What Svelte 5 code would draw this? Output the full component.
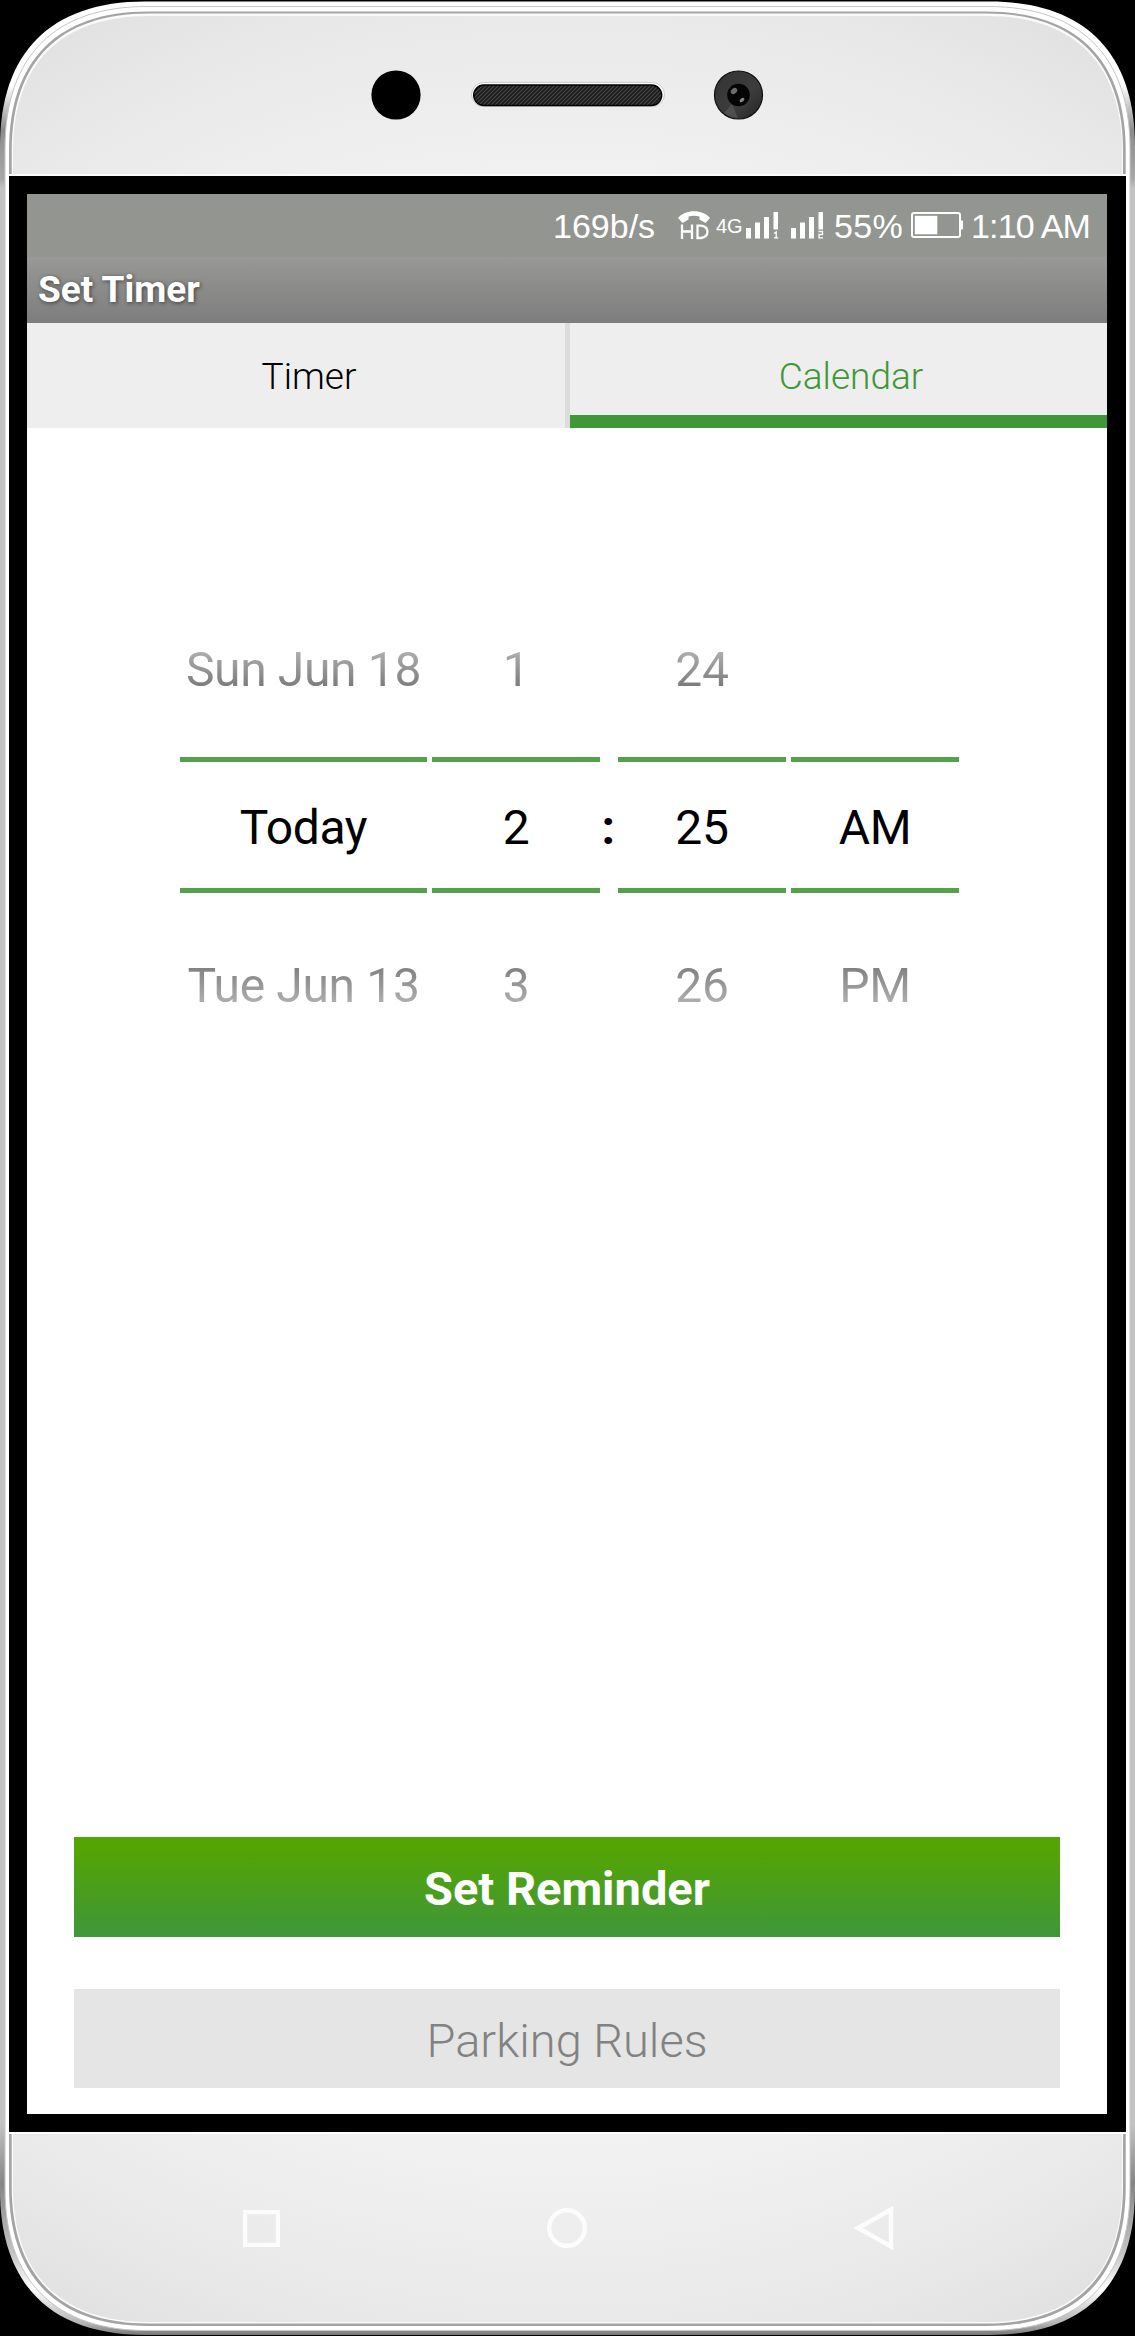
<script>
  // Outline with soft corners, given its four edges and the corner extent.
  function shell(l, t, r, b, c) {
    const k = c * 0.35;
    return `M${l} ${t + c}C${l} ${t + k} ${l + k} ${t} ${l + c} ${t}H${r - c}C${r - k} ${t} ${r} ${t + k} ${r} ${t + c}V${b - c}C${r} ${b - k} ${r - k} ${b} ${r - c} ${b}H${l + c}C${l + k} ${b} ${l} ${b - k} ${l} ${b - c}Z`;
  }

  const tabs = [
    { label: 'Timer', active: false },
    { label: 'Calendar', active: true }
  ];

  const wheels = [
    { kind: 'day', values: ['Sun Jun 18', 'Today', 'Tue Jun 13'] },
    { kind: 'hour', values: ['1', '2', '3'] },
    { kind: 'minute', values: ['24', '25', '26'] },
    { kind: 'half', values: ['', 'AM', 'PM'] }
  ];
</script>

<div class="phone">
  <svg class="body" viewBox="0 0 1135 2336" width="1135" height="2336" aria-hidden="true">
    <defs>
      <linearGradient id="rim" x1="0" y1="0" x2="0" y2="1">
        <stop offset="0" stop-color="#fff" />
        <stop offset="0.036" stop-color="#fff" />
        <stop offset="0.055" stop-color="#8c8c8c" />
        <stop offset="0.076" stop-color="#a8a8a8" />
        <stop offset="0.08" stop-color="#c2c2c2" />
        <stop offset="0.91" stop-color="#c2c2c2" />
        <stop offset="0.935" stop-color="#858585" />
        <stop offset="0.965" stop-color="#c4c4c4" />
        <stop offset="0.98" stop-color="#fff" />
        <stop offset="0.995" stop-color="#b4b4b4" />
        <stop offset="1" stop-color="#777" />
      </linearGradient>
      <radialGradient id="face" gradientUnits="userSpaceOnUse" cx="567" cy="1168" r="1290" gradientTransform="translate(567 0) scale(0.9 1) translate(-567 0)">
        <stop offset="0" stop-color="#f4f4f4" />
        <stop offset="0.75" stop-color="#f2f2f2" />
        <stop offset="0.9" stop-color="#e9e9e9" />
        <stop offset="1" stop-color="#e0e0e0" />
      </radialGradient>
    </defs>
    <path d={shell(0, 1.5, 1135, 2335, 145)} fill="url(#rim)" />
    <path d={shell(5, 6.5, 1130, 2330.5, 142)} fill="#fff" stroke="#c6c6c6" stroke-width="1" />
    <path d={shell(9, 11.5, 1125.7, 2326, 139)} fill="#a4a4a4" />
    <path d={shell(11.7, 13.5, 1123, 2323.5, 137)} fill="#fbfbfb" />
    <path d={shell(13, 16, 1122, 2322, 136)} fill="url(#face)" />
  </svg>

  <header class="forehead">
    <svg width="394" height="52" viewBox="0 0 394 52" aria-hidden="true">
      <defs>
        <pattern id="mesh" width="4" height="4" patternUnits="userSpaceOnUse">
          <rect width="4" height="4" fill="#1b1b1b" />
          <path d="M0 4L4 0M-1 1L1 -1M3 5L5 3" stroke="#484848" stroke-width="1.1" />
        </pattern>
        <linearGradient id="lens" x1="0" y1="0" x2="1" y2="1">
          <stop offset="0" stop-color="#333" />
          <stop offset="0.6" stop-color="#3d3d3d" />
          <stop offset="1" stop-color="#242424" />
        </linearGradient>
      </defs>
      <circle cx="25" cy="26" r="24.6" fill="#000" />
      <rect x="100.500" y="13.500" width="193" height="24" rx="12" fill="#fafafa" stroke="#ccc" />
      <rect x="102.700" y="16" width="188" height="20.500" rx="10.200" fill="url(#mesh)" stroke="#000" stroke-width="1.400" />
      <circle cx="367.500" cy="26" r="24" fill="url(#lens)" stroke="#111" stroke-width="1.200" />
      <path d="M361 35L353 44A24 24 0 0 0 367 49Z" fill="#656565" opacity="0.450" />
      <circle cx="367.500" cy="26" r="11.300" fill="#050505" />
      <ellipse cx="363" cy="22" rx="3.600" ry="2.600" transform="rotate(-40 363 22)" fill="#6a6a6a" />
      <ellipse cx="371" cy="31" rx="2.800" ry="1.700" transform="rotate(-40 371 31)" fill="#888" />
    </svg>
  </header>

  <main class="bezel">
    <div class="screen">
      <div class="status">
        <span class="rate">169b/s</span>
        <svg class="hd" width="32" height="29" viewBox="0 0 32 29">
          <path d="M0 7C7 -2 25 -2 32 7L27.500 12L21.500 8.500V5.500Q16 4 10.500 5.500V8.500L4.500 12Z" fill="#fff" />
          <path d="M4 13.500V28M14 13.500V28M4 20.500H14M19.500 14.600V27H23Q29.500 26 29.500 20.800Q29.500 15.500 23 14.600Z" fill="none" stroke="#fff" stroke-width="2.300" />
        </svg>
        <span class="net">4G</span>
        <svg class="signal" width="78" height="27" viewBox="0 0 78 27">
          <g fill="#fff">
            <path d="M0 16H5V26.500H0ZM9 10.500H14V26.500H9ZM18 5H23V26.500H18ZM27.500 0H32V17.500H27.500Z" />
            <path d="M45 16H50V26.500H45ZM54 10.500H59V26.500H54ZM63 5H68V26.500H63ZM72.500 0H77V17.500H72.500Z" />
          </g>
          <path d="M28 21.500L30.200 20V25.500M28 25.800H32.200M72.500 19.500H76.500V22.500H73V25.800H77" fill="none" stroke="#fff" stroke-width="1.300" />
        </svg>
        <span class="charge">55%</span>
        <svg class="battery" width="52" height="26" viewBox="0 0 52 26">
          <rect x="1" y="1" width="48" height="24" rx="2" fill="none" stroke="#fff" stroke-width="2" />
          <rect x="3.800" y="3.800" width="22.500" height="18.500" fill="#fff" />
          <path d="M49 8.500H52V17.500H49Z" fill="#fff" />
        </svg>
        <span class="clock">1:10 AM</span>
      </div>

      <h1 class="title">Set Timer</h1>

      <nav class="tabs">
        {#each tabs as tab}
          <button class="tab" class:active={tab.active}>{tab.label}</button>
        {/each}
      </nav>

      <section class="picker">
        {#each wheels as wheel}
          {#if wheel.kind === 'minute'}<span class="colon">:</span>{/if}
          <div class="wheel {wheel.kind}">
            <span class="value before">{wheel.values[0]}</span>
            <span class="value chosen">{wheel.values[1]}</span>
            <span class="value after">{wheel.values[2]}</span>
          </div>
        {/each}
      </section>

      <footer class="actions">
        <button class="remind">Set Reminder</button>
        <button class="rules">Parking Rules</button>
      </footer>
    </div>
  </main>

  <div class="chin">
    <svg width="37" height="37" viewBox="0 0 37 37"><rect x="2" y="2" width="33" height="33" /></svg>
    <svg width="40" height="40" viewBox="0 0 40 40"><circle cx="20" cy="20" r="17.800" /></svg>
    <svg width="40" height="46" viewBox="0 0 40 46"><path d="M37 4.500V41.500L4 23Z" /></svg>
  </div>
</div>

<style>
  :global(body) {
    background: #000;
  }
  .phone {
    position: relative;
    box-sizing: border-box;
    width: 1135px;
    height: 2336px;
    display: flex;
    flex-direction: column;
    overflow: hidden;
    background: #000;
    font-family: Roboto, sans-serif;
  }
  .body {
    position: absolute;
    inset: 0;
  }
  .forehead,
  .bezel,
  .chin {
    position: relative;
  }
  .forehead {
    box-sizing: border-box;
    height: 176px;
    margin: 0 9px;
    padding: 69px 0 0 362px;
    border-bottom: 2px solid #fbfbfb;
  }
  .bezel {
    box-sizing: border-box;
    height: 1956px;
    margin: 0 9px 0 9px;
    padding: 18px;
    background: #000;
  }
  .screen {
    width: 1080px;
    height: 1920px;
    display: flex;
    flex-direction: column;
    background: #fff;
  }
  button {
    border: 0;
    padding: 0;
    font-family: inherit;
  }
  .status {
    height: 63px;
    display: flex;
    align-items: flex-start;
    padding-right: 16px;
    justify-content: flex-end;
    background: #939591;
    color: #fff;
    font: 34px/38px 'Liberation Sans', Arial, sans-serif;
    white-space: nowrap;
  }
  .status span {
    margin-top: 13px;
  }
  .rate {
    width: 125px;
  }
  .hd {
    margin-top: 17px;
  }
  .status .net {
    width: 30px;
    margin: 13px 0 0 6px;
    font-size: 20px;
  }
  .signal {
    margin-top: 18px;
  }
  .charge {
    margin-left: 10px;
    width: 77px;
    letter-spacing: 0.3px;
  }
  .battery {
    margin-top: 18px;
  }
  .clock {
    margin-left: 8px;
    width: 120px;
    letter-spacing: -0.8px;
  }
  .title {
    box-sizing: border-box;
    height: 66px;
    margin: 0;
    padding-left: 11px;
    background: linear-gradient(#989896, #7d7d7d);
    color: #fff;
    font-size: 37px;
    line-height: 66px;
    font-weight: 700;
    text-shadow: 1px 1px 4px rgba(0, 0, 0, 0.55);
  }
  .tabs {
    height: 105px;
    display: grid;
    grid-template-columns: 543px 537px;
  }
  .tab {
    box-sizing: border-box;
    padding: 2px 0 0 26px;
    background: #eee;
    color: #000;
    font-size: 37px;
    font-weight: 300;
    border-right: 5px solid #dcdcdc;
  }
  .tab.active {
    padding: 15px 0 0 25px;
    border-right: 0;
    border-bottom: 13px solid #3f9736;
    color: #3f9736;
  }
  .picker {
    display: flex;
    margin: 171px 0 0 153px;
    height: 474px;
    font-size: 48px;
    line-height: 158px;
    letter-spacing: -0.35px;
  }
  .wheel {
    width: 168px;
    display: grid;
    grid-template-rows: 158px 136px 180px;
    text-align: center;
  }
  .day {
    width: 247px;
    margin-right: 5px;
  }
  .minute {
    margin-right: 5px;
  }
  .value {
    box-sizing: border-box;
  }
  .before {
    color: transparent;
    background: linear-gradient(#bbb 48px, #acacac 54px, #787878 90px);
    background-clip: text;
    -webkit-background-clip: text;
    line-height: 142px;
  }
  .chosen {
    border: solid #54a14b;
    border-width: 5px 0;
    line-height: 131px;
    color: #000;
  }
  .after {
    color: transparent;
    background: linear-gradient(#7e7e7e 72px, #b0b0b0 111px);
    background-clip: text;
    -webkit-background-clip: text;
    line-height: 185px;
  }
  .colon {
    width: 16px;
    margin-right: 2px;
    display: flex;
    justify-content: center;
    padding-top: 150px;
    font-weight: 700;
  }
  .actions {
    margin: auto 47px 26px;
    display: flex;
    flex-direction: column;
    gap: 52px;
  }
  .actions button {
    height: 99px;
    font-size: 47px;
  }
  .actions .remind {
    height: 100px;
    padding-top: 2px;
    background: linear-gradient(#54a404 12%, #3f9738 96%);
    color: #fff;
    font-weight: 700;
  }
  .actions .rules {
    padding-top: 3px;
    background: #e5e5e5;
    color: #828282;
    font-weight: 300;
  }
  .chin {
    flex: 1;
    display: flex;
    align-items: flex-start;
    box-sizing: border-box;
    margin: 0 9px;
    border-top: 2px solid #fff;
    padding: 76px 0 0 234px;
  }
  .chin svg {
    fill: none;
    stroke: #fcfcfc;
    stroke-width: 4.4;
  }
  .chin svg:nth-child(2) {
    margin: -2px 267px;
  }
  .chin svg:nth-child(3) {
    margin-top: -5px;
  }
</style>
